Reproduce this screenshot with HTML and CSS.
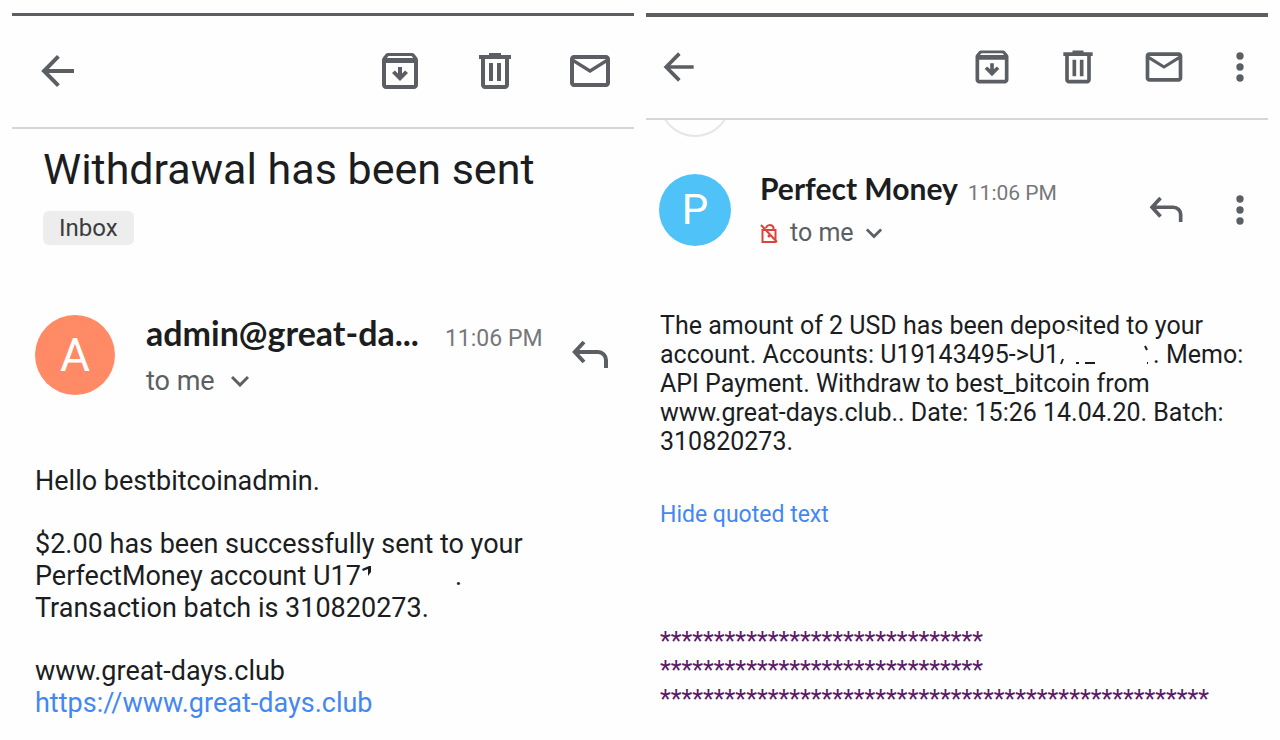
FILE: index.html
```html
<!DOCTYPE html>
<html lang="en">
  <head>
    <meta charset="UTF-8" />
    <title>Mail</title>
    <link rel="stylesheet" href="styles.css">
  </head>
  <body>
    <svg class="sprite" aria-hidden="true">
      <symbol id="back" viewBox="0 0 24 24"><path d="M20 12H5.500M12.200 4.700L5 12L12.200 19.300" fill="none" stroke="currentColor" stroke-width="2"/></symbol>
      <symbol id="archive" viewBox="0 0 24 24"><path d="M20.540 5.230l-1.390-1.680C18.880 3.210 18.470 3 18 3H6c-.47 0-.88.21-1.160.55L3.460 5.230C3.170 5.570 3 6.020 3 6.500V19c0 1.100.9 2 2 2h14c1.100 0 2-.9 2-2V6.500c0-.48-.17-.93-.46-1.270zM6.240 4.500h11.520l.83 1H5.420l.82-1zM5 19V8h14v11H5zM11 10h2v3.200l1.600-1.500L16 13l-4 4-4-4 1.400-1.300 1.600 1.500z" fill="currentColor"/></symbol>
      <symbol id="trash" viewBox="0 0 24 24"><path d="M15 4V3H9v1H4v2h1v13c0 1.100.9 2 2 2h10c1.100 0 2-.9 2-2V6h1V4h-5zm2 15H7V6h10v13zM9 8h2v9H9zm4 0h2v9h-2z" fill="currentColor"/></symbol>
      <symbol id="mail" viewBox="0 0 24 24"><path d="M20 4H4c-1.100 0-2 .9-2 2v12c0 1.100.9 2 2 2h16c1.100 0 2-.9 2-2V6c0-1.100-.9-2-2-2zm0 14H4V8l8 5 8-5v10zm-8-7L4 6h16l-8 5z" fill="currentColor"/></symbol>
      <symbol id="more" viewBox="6 0 12 24"><path d="M12 8a2 2 0 1 0 0-4 2 2 0 0 0 0 4zm0 2a2 2 0 1 0 0 4 2 2 0 0 0 0-4zm0 6a2 2 0 1 0 0 4 2 2 0 0 0 0-4z" fill="currentColor"/></symbol>
      <symbol id="reply" viewBox="0 0 24 24"><path d="M9 5.500L4.400 10.500L9 15.500M4.500 10.500H16a4 4 0 0 1 4 4v4" fill="none" stroke="currentColor" stroke-width="2"/></symbol>
      <symbol id="chevron" viewBox="0 0 18 12"><path d="M1 2l8 8 8-8" fill="none" stroke="currentColor" stroke-width="3"/></symbol>
      <symbol id="unlocked" viewBox="0 0 18 20"><path d="M2.500 7h13v12h-13zM6 5a4 4 0 0 1 7.500-.5V7M1 2l16 17" fill="none" stroke="currentColor" stroke-width="2"/><circle cx="9" cy="13" r="1.500" fill="currentColor"/></symbol>
    </svg>

    <main class="screens">
      <section class="screen">
        <header class="toolbar">
          <button aria-label="Back"><svg><use href="#back"/></svg></button>
          <div class="actions">
            <button aria-label="Archive"><svg><use href="#archive"/></svg></button>
            <button aria-label="Delete"><svg><use href="#trash"/></svg></button>
            <button aria-label="Mark unread"><svg><use href="#mail"/></svg></button>
          </div>
        </header>
        <div class="subject">
          <h1>Withdrawal has been sent</h1>
          <span class="label">Inbox</span>
        </div>
        <div class="sender">
          <div class="avatar orange">A</div>
          <div class="details">
            <div class="from"><span class="name">admin@great-da...</span><time>11:06 PM</time></div>
            <button class="to">to me <svg class="chevron"><use href="#chevron"/></svg></button>
          </div>
          <button aria-label="Reply"><svg><use href="#reply"/></svg></button>
        </div>
        <div class="message">
          <p>Hello bestbitcoinadmin.</p>
          <p>$2.00 has been successfully sent to your<br>
            PerfectMoney account U17<svg class="erased" viewBox="0 0 94 24"><path d="M1 4l7-3h2v6l-3 4V4L2 6z" fill="currentColor"/></svg>.<br>
            Transaction batch is 310820273.</p>
          <p>www.great-days.club<br>
            <a href="https://www.great-days.club">https://www.great-days.club</a></p>
        </div>
      </section>

      <section class="screen compact">
        <header class="toolbar">
          <button aria-label="Back"><svg><use href="#back"/></svg></button>
          <div class="actions">
            <button aria-label="Archive"><svg><use href="#archive"/></svg></button>
            <button aria-label="Delete"><svg><use href="#trash"/></svg></button>
            <button aria-label="Mark unread"><svg><use href="#mail"/></svg></button>
            <button class="more" aria-label="More"><svg><use href="#more"/></svg></button>
          </div>
        </header>
        <div class="previous"><div class="ring"></div></div>
        <div class="sender">
          <div class="avatar blue">P</div>
          <div class="details">
            <div class="from"><span class="name">Perfect Money</span><time>11:06 PM</time></div>
            <button class="to"><svg class="unlocked"><use href="#unlocked"/></svg> to me <svg class="chevron"><use href="#chevron"/></svg></button>
          </div>
          <button aria-label="Reply"><svg><use href="#reply"/></svg></button>
          <button class="more" aria-label="More"><svg><use href="#more"/></svg></button>
        </div>
        <div class="message">
          <p>The amount of 2 USD has been deposited to your<br>
            account. Accounts: U19143495-&gt;U1<svg class="erased" viewBox="0 0 94 24"><path d="M5-12l13-1v6H5z" fill="#FEFEFE"/><path d="M4 16l-2 5M17 20h3M26 20h10M86 3l2 4M88 20h1" fill="none" stroke="currentColor" stroke-width="2"/></svg>. Memo:<br>
            API Payment. Withdraw to best_bitcoin from<br>
            www.great-days.club.. Date: 15:26 14.04.20. Batch:<br>
            310820273.</p>
          <button class="quote-toggle">Hide quoted text</button>
          <p class="quoted">******************************<br>
            ******************************<br>
            ***************************************************</p>
        </div>
      </section>
    </main>
  </body>
</html>
```
FILE: styles.css
```css
* {
  box-sizing: border-box;
}
body {
  margin: 0;
  background: #FEFEFE;
  color: #1B1D1F;
  font-family: Roboto, sans-serif;
}
h1, p {
  margin: 0;
}
button {
  padding: 0;
  border: 0;
  background: none;
  color: #5B5F63;
  font: inherit;
  cursor: pointer;
}
svg {
  display: block;
  width: 48px;
  height: 48px;
}
a {
  color: #4388F0;
  text-decoration: none;
}
.sprite {
  display: none;
}
.screens {
  display: grid;
  grid-template-columns: 1fr 1fr;
  gap: 12px;
  padding: 13px 12px;
}
.toolbar {
  display: flex;
  align-items: center;
  justify-content: space-between;
  height: 116px;
  padding: 0 20px 2px 22px;
  border-top: 3px solid #5B5F63;
  border-bottom: 2px solid #D6D6D6;
}
.actions {
  display: flex;
  gap: 47px;
}
.subject {
  padding: 14px 31px 0;
}
h1 {
  font-size: 43px;
  font-weight: 400;
  line-height: 52px;
}
.label {
  display: inline-block;
  margin-top: 16px;
  padding: 0 16px;
  border-radius: 6px;
  background: #EDEDED;
  color: #3A3C3E;
  font-size: 24px;
  line-height: 34px;
}
.sender {
  display: flex;
  align-items: center;
  margin-top: 68px;
  padding: 0 20px 0 23px;
}
.avatar {
  width: 80px;
  height: 80px;
  border-radius: 50%;
  color: #FFFFFF;
  font-size: 46px;
  line-height: 80px;
  text-align: center;
}
.orange {
  background: #FF8A65;
}
.blue {
  background: #4FC3F7;
}
.details {
  flex: 1;
  padding-left: 31px;
}
.from {
  display: flex;
  align-items: baseline;
  gap: 26px;
  line-height: 40px;
  white-space: nowrap;
}
.name {
  font-family: Lato, sans-serif;
  font-size: 34px;
  font-weight: 700;
}
time {
  color: #75787B;
  font-size: 23px;
}
.to {
  display: flex;
  align-items: center;
  gap: 16px;
  margin-top: 6px;
  font-size: 27px;
  line-height: 32px;
}
.chevron {
  width: 18px;
  height: 12px;
}
.message {
  padding: 68px 23px 0;
  font-size: 27px;
  line-height: 32px;
}
.message p + p {
  margin-top: 31px;
}
.erased {
  display: inline-block;
  width: 94px;
  height: 24px;
  overflow: visible;
  vertical-align: -4px;
}

/* second phone, slightly smaller scale */
.compact svg {
  width: 44px;
  height: 44px;
}
.compact .toolbar {
  height: 107px;
  padding: 0 16px 2px 11px;
  border-top-width: 4px;
}
.compact .actions {
  gap: 42px;
}
.compact .more svg {
  width: 24px;
}
.previous {
  display: flex;
  align-items: flex-end;
  height: 17px;
  padding-left: 13px;
  overflow: hidden;
}
.ring {
  flex: none;
  width: 72px;
  height: 72px;
  border: 2px solid #E4E6E8;
  border-radius: 50%;
}
.compact .sender {
  margin-top: 33px;
  padding: 0 16px 0 13px;
}
.compact .avatar {
  width: 72px;
  height: 72px;
  font-size: 42px;
  line-height: 72px;
}
.compact .details {
  padding-left: 29px;
}
.compact .from {
  gap: 10px;
  line-height: 36px;
}
.compact .name {
  font-size: 30px;
}
.compact time {
  font-size: 21px;
}
.compact .to {
  gap: 12px;
  font-size: 25px;
}
.compact .sender .more {
  margin-left: 40px;
}
.compact .chevron {
  width: 16px;
  height: 12px;
}
.compact .unlocked {
  width: 18px;
  height: 20px;
  color: #DB4437;
}
.compact .message {
  padding: 62px 14px 0;
  font-size: 25px;
  line-height: 29px;
}
.compact .erased {
  width: 94px;
  height: 24px;
}
.compact .quote-toggle {
  display: block;
  margin-top: 44px;
  color: #4388F0;
  font-size: 23px;
}
.compact .quoted {
  margin-top: 98px;
  color: #5A1A66;
}
```
